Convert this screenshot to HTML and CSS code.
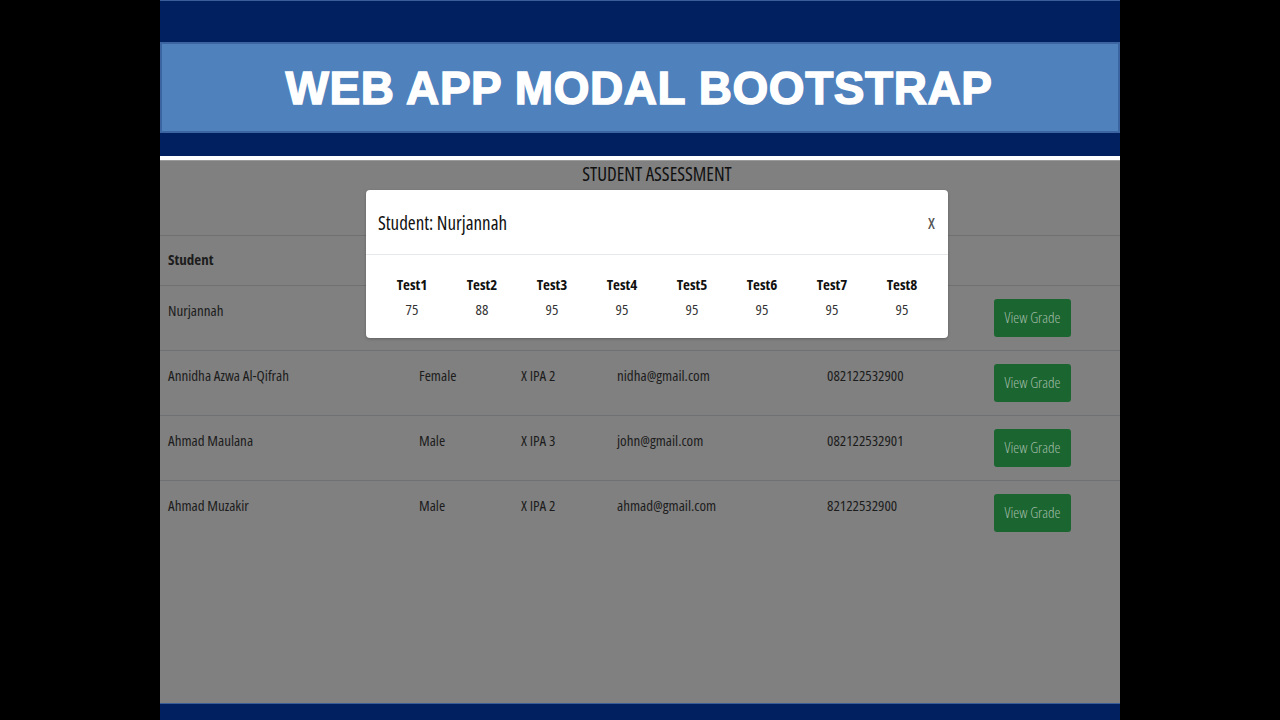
FILE: index.html
```html
<!DOCTYPE html>
<html lang="en">
<head>
<meta charset="utf-8">
<title>Web App Modal Bootstrap</title>
<link rel="stylesheet" href="styles.css">
</head>
<body>
<div class="frame">
  <div class="bar-top"></div>
  <div class="banner"><h1 class="banner-title">WEB APP MODAL BOOTSTRAP</h1></div>
  <div class="bar-mid"></div>
  <div class="content">
    <h2 class="page-title">STUDENT ASSESSMENT</h2>
    <div class="table">
      <div class="row head">
        <div class="cell">Student</div>
        <div class="cell">Gender</div>
        <div class="cell">Class</div>
        <div class="cell">Email</div>
        <div class="cell">Phone</div>
        <div class="cell"></div>
      </div>
      <div class="row">
        <div class="cell">Nurjannah</div>
        <div class="cell">Female</div>
        <div class="cell">X IPA 1</div>
        <div class="cell">nurjannah@gmail.com</div>
        <div class="cell">082122532899</div>
        <div class="cell"><span class="btn">View Grade</span></div>
      </div>
      <div class="row">
        <div class="cell">Annidha Azwa Al-Qifrah</div>
        <div class="cell">Female</div>
        <div class="cell">X IPA 2</div>
        <div class="cell">nidha@gmail.com</div>
        <div class="cell">082122532900</div>
        <div class="cell"><span class="btn">View Grade</span></div>
      </div>
      <div class="row">
        <div class="cell">Ahmad Maulana</div>
        <div class="cell">Male</div>
        <div class="cell">X IPA 3</div>
        <div class="cell">john@gmail.com</div>
        <div class="cell">082122532901</div>
        <div class="cell"><span class="btn">View Grade</span></div>
      </div>
      <div class="row">
        <div class="cell">Ahmad Muzakir</div>
        <div class="cell">Male</div>
        <div class="cell">X IPA 2</div>
        <div class="cell">ahmad@gmail.com</div>
        <div class="cell">82122532900</div>
        <div class="cell"><span class="btn">View Grade</span></div>
      </div>
    </div>

    <div class="modal">
      <div class="modal-header">
        <span class="modal-title">Student: Nurjannah</span>
        <span class="modal-close">x</span>
      </div>
      <div class="modal-body">
        <div class="grade"><div class="g-label">Test1</div><div class="g-val">75</div></div>
        <div class="grade"><div class="g-label">Test2</div><div class="g-val">88</div></div>
        <div class="grade"><div class="g-label">Test3</div><div class="g-val">95</div></div>
        <div class="grade"><div class="g-label">Test4</div><div class="g-val">95</div></div>
        <div class="grade"><div class="g-label">Test5</div><div class="g-val">95</div></div>
        <div class="grade"><div class="g-label">Test6</div><div class="g-val">95</div></div>
        <div class="grade"><div class="g-label">Test7</div><div class="g-val">95</div></div>
        <div class="grade"><div class="g-label">Test8</div><div class="g-val">95</div></div>
      </div>
    </div>
  </div>
  <div class="bar-bottom"></div>
</div>
</body>
</html>
```

FILE: styles.css
```css
* { box-sizing: border-box; }
html, body { margin: 0; padding: 0; }
body {
  background: #000;
  font-family: "Open Sans", "DejaVu Sans", sans-serif;
  font-stretch: 75%;
}
.frame {
  width: 960px;
  height: 720px;
  margin: 0 auto;
  display: flex;
  flex-direction: column;
  background: #002060;
}
.bar-top {
  height: 42px;
  background: #002060;
  border-top: 1px solid #3c5e98;
}
.banner {
  height: 91px;
  background: #4f81bd;
  border: 2px solid #3b64a0;
  display: flex;
  align-items: center;
  justify-content: center;
}
.banner-title {
  margin: 0;
  color: #fff;
  font-family: "Liberation Sans", Arial, sans-serif;
  font-stretch: normal;
  font-weight: 700;
  font-size: 46px;
  letter-spacing: 0.55px;
  -webkit-text-stroke: 1.4px #fff;
  line-height: 1;
  padding-right: 2px;
}
.bar-mid {
  height: 23px;
  background: #002060;
  border-bottom: 4px solid #fff;
  box-sizing: content-box;
}
.content {
  position: relative;
  flex: 1;
  background: #808080;
  color: #1c1c1c;
  border-top: 1px solid #9a9a9a;
}
.page-title {
  margin: 0;
  padding-top: 1px;
  padding-left: 34px;
  text-align: center;
  font-size: 19px;
  font-weight: 400;
  line-height: 24px;
  color: #101010;
}
.table {
  margin-top: 49px;
}
.row {
  display: grid;
  grid-template-columns: 251px 102px 96px 210px 167px 1fr;
  border-top: 1px solid #6e7072;
  height: 65px;
}
.row.head { height: 50px; }
.cell {
  padding: 12px 8px;
  font-size: 15px;
  font-weight: 400;
  line-height: 24px;
  white-space: nowrap;
}
.head .cell {
  font-weight: 700;
  padding-top: 11px;
}
.btn {
  display: inline-block;
  margin-top: 1px;
  width: 77px;
  height: 38px;
  line-height: 36px;
  text-align: center;
  background: #1b6530;
  color: #a3bea9;
  border-radius: 3px;
  font-size: 15px;
  font-weight: 350;
  white-space: nowrap;
}

.modal {
  position: absolute;
  left: 206px;
  top: 29px;
  width: 582px;
  background: #fff;
  border-radius: 4px;
  box-shadow: 0 1px 3px rgba(0,0,0,0.25);
  color: #111;
}
.modal-header {
  height: 65px;
  padding: 0 12px;
  display: flex;
  align-items: center;
  justify-content: space-between;
  border-bottom: 1px solid #e6e8ea;
}
.modal-title {
  font-size: 19px;
  font-weight: 400;
  padding-top: 1px;
}
.modal-close {
  font-size: 20px;
  font-weight: 400;
  color: #555;
  padding-right: 1px;
  padding-bottom: 2px;
}
.modal-body {
  display: flex;
  padding: 17px 11px 16px;
}
.grade {
  width: 70px;
  text-align: center;
}
.g-label {
  font-weight: 700;
  font-size: 15px;
  line-height: 24px;
}
.g-val {
  font-size: 15px;
  font-weight: 400;
  line-height: 26px;
  color: #333;
}
.bar-bottom {
  height: 17px;
  background: #002060;
  border-top: 1px solid #3c5e98;
}
```
